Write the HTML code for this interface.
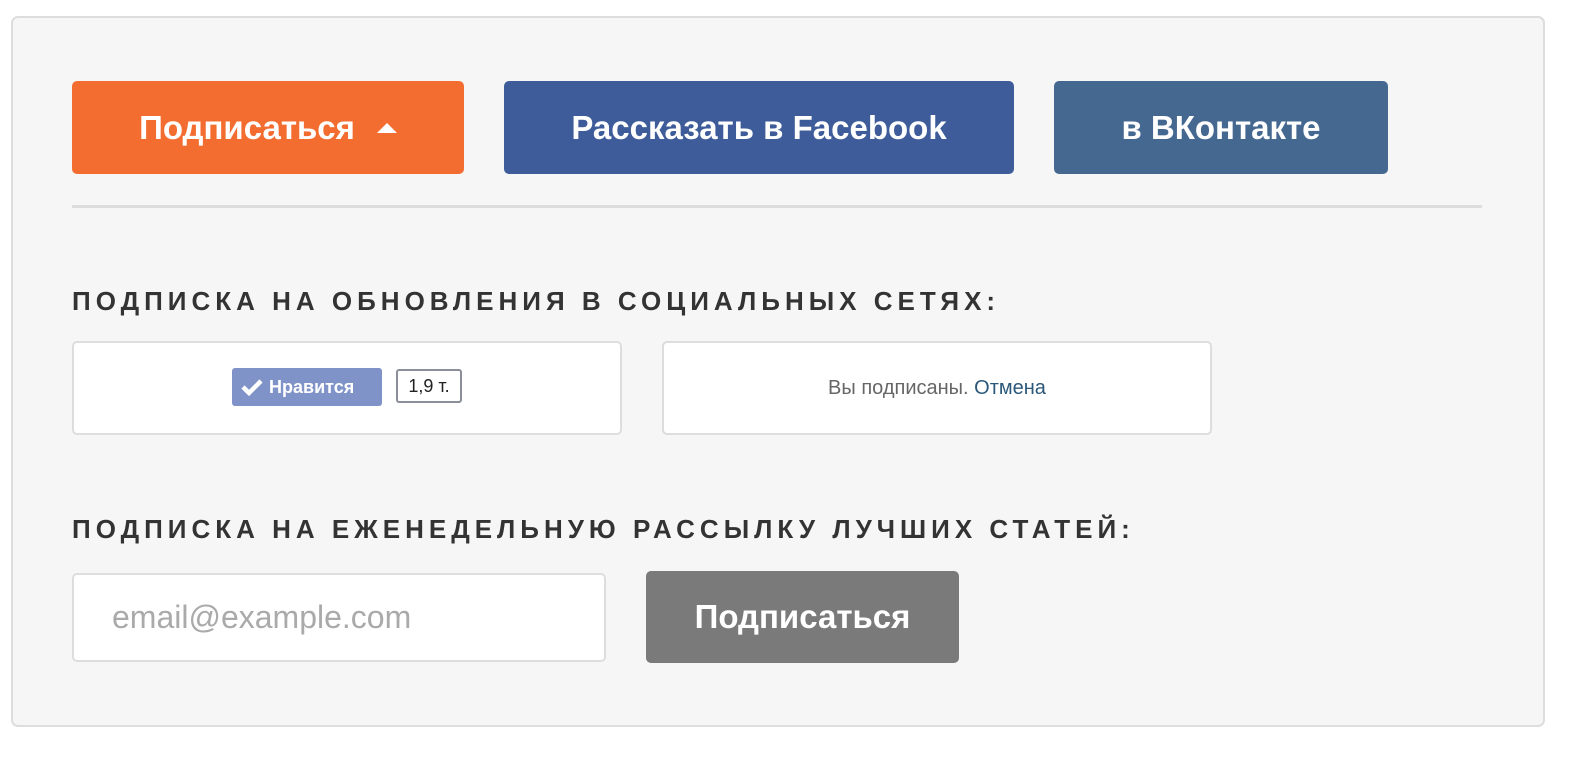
<!DOCTYPE html>
<html><head><meta charset="utf-8"><style>
body{margin:0;width:1596px;height:758px;background:#fff;font-family:"Liberation Sans","DejaVu Sans",sans-serif;position:relative;overflow:hidden}
.box{position:absolute;left:11px;top:16px;width:1530px;height:707px;border:2px solid #ddd;border-radius:7px;background:#f6f6f6}
.btn{position:absolute;top:81px;height:93px;border-radius:5px;color:#fff;font-weight:bold;font-size:33px;display:flex;align-items:center;justify-content:center}
.hr{position:absolute;left:72px;top:205px;width:1410px;height:3px;background:#ddd}
h2{position:absolute;left:72px;margin:0;font-size:26px;font-weight:bold;letter-spacing:5px;color:#333;white-space:nowrap}
.card{position:absolute;top:341px;height:90px;background:#fff;border:2px solid #ddd;border-radius:5px}
</style></head><body>
<div class="box"></div>
<div class="btn" style="left:72px;width:392px;background:#f46d30">Подписаться<span style="display:inline-block;margin-left:22px;width:0;height:0;border-left:10px solid transparent;border-right:10px solid transparent;border-bottom:10px solid #fff"></span></div>
<div class="btn" style="left:504px;width:510px;background:#3d5c99">Рассказать в Facebook</div>
<div class="btn" style="left:1054px;width:334px;background:#456890">в ВКонтакте</div>
<div class="hr"></div>
<h2 style="top:286px">ПОДПИСКА НА ОБНОВЛЕНИЯ В СОЦИАЛЬНЫХ СЕТЯХ:</h2>
<div class="card" style="left:72px;width:546px">
 <div style="position:absolute;left:158px;top:25px;width:150px;height:38px;background:#7f93c8;border-radius:3px;color:#fff;font-weight:bold;font-size:18px;display:flex;align-items:center;padding-left:0">
  <svg width="24" height="20" viewBox="0 0 24 20" style="margin:0 5px 0 8px"><path d="M3 10 L9 16 L21 4" stroke="#fff" stroke-width="4.5" fill="none"/></svg>Нравится</div>
 <div style="position:absolute;left:322px;top:26px;width:66px;height:34px;border:2px solid #8a8f99;border-radius:3px;background:#fff;font-size:18px;color:#222;display:flex;align-items:center;justify-content:center;box-sizing:border-box">1,9 т.</div>
</div>
<div class="card" style="left:662px;width:546px;font-size:20px;color:#666;display:flex;align-items:center;justify-content:center">Вы подписаны.&nbsp;<span style="color:#2b587a">Отмена</span></div>
<h2 style="top:514px">ПОДПИСКА НА ЕЖЕНЕДЕЛЬНУЮ РАССЫЛКУ ЛУЧШИХ СТАТЕЙ:</h2>
<div style="position:absolute;left:72px;top:573px;background:#fff;border:2px solid #ddd;border-radius:5px;font-size:32px;color:#aaa;display:flex;align-items:center;padding-left:38px;box-sizing:border-box;width:534px;height:89px">email@example.com</div>
<div style="position:absolute;left:646px;top:571px;width:313px;height:92px;background:#7a7a7a;border-radius:5px;color:#fff;font-weight:bold;font-size:33px;display:flex;align-items:center;justify-content:center">Подписаться</div>
</body></html>
